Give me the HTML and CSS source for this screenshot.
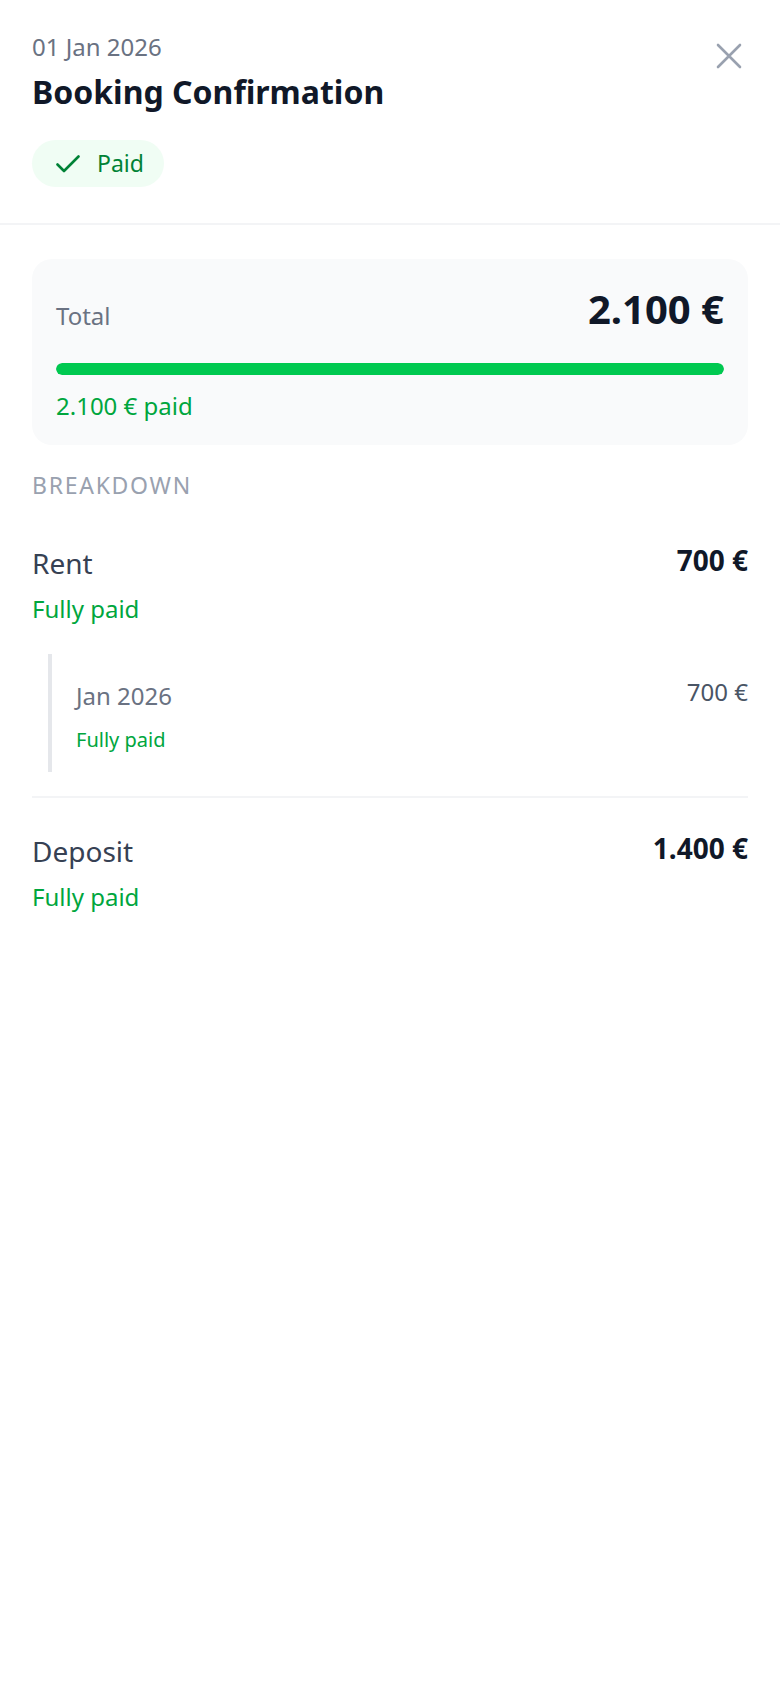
FILE: index.html
```
<!DOCTYPE html>
<html lang="en">
<head>
<meta charset="utf-8">
<title>Booking Confirmation</title>
<link rel="stylesheet" href="styles.css">
</head>
<body>
<div class="sheet">
  <header class="header">
    <div class="header-text">
      <div class="date">01 Jan 2026</div>
      <h1 class="title">Booking Confirmation</h1>
      <div class="pill">
        <svg class="pill-icon" width="24" height="18" viewBox="0 0 24 18" fill="none" stroke="currentColor" stroke-width="2.6" stroke-linecap="round" stroke-linejoin="round"><path d="M22.5 1.5 L8 16 L1.5 9.5"/></svg>
        <span>Paid</span>
      </div>
    </div>
    <button class="close" aria-label="Close">
      <svg width="26" height="26" viewBox="0 0 26 26" fill="none" stroke="currentColor" stroke-width="2.6" stroke-linecap="round"><path d="M2 2 L24 24 M24 2 L2 24"/></svg>
    </button>
  </header>

  <main class="content">
    <section class="total-card">
      <div class="total-row">
        <span class="total-label">Total</span>
        <span class="total-amount">2.100 €</span>
      </div>
      <div class="bar"><div class="bar-fill" style="width:100%"></div></div>
      <div class="paid-text">2.100 € paid</div>
    </section>

    <div class="section-label">BREAKDOWN</div>

    <div class="item">
      <div class="item-row">
        <span class="item-name">Rent</span>
        <span class="item-amount">700 €</span>
      </div>
      <div class="status">Fully paid</div>
      <div class="sub">
        <div class="sub-row">
          <span class="sub-name">Jan 2026</span>
          <span class="sub-amount">700 €</span>
        </div>
        <div class="sub-status">Fully paid</div>
      </div>
    </div>

    <div class="divider"></div>

    <div class="item item-last">
      <div class="item-row">
        <span class="item-name">Deposit</span>
        <span class="item-amount">1.400 €</span>
      </div>
      <div class="status">Fully paid</div>
    </div>
  </main>
</div>
</body>
</html>
```

FILE: styles.css
```
* { box-sizing: border-box; }

html, body {
  margin: 0;
  padding: 0;
  background: #ffffff;
}

body {
  font-family: "Noto Sans", "Open Sans", "Liberation Sans", sans-serif;
  color: #101828;
}

.sheet {
  width: 780px;
  min-height: 1688px;
  background: #ffffff;
}

.header {
  display: flex;
  justify-content: space-between;
  align-items: flex-start;
  padding: 32px 32px 36px 32px;
  border-bottom: 2px solid #f3f4f6;
}

.date {
  font-size: 24px;
  line-height: 30px;
  color: #6a7282;
}

.title {
  margin: 10px 0 0 0;
  font-size: 32px;
  line-height: 40px;
  font-weight: 700;
  color: #101828;
}

.pill {
  margin-top: 28px;
  display: inline-flex;
  align-items: center;
  gap: 17px;
  height: 47px;
  padding: 0 20px 0 24px;
  border-radius: 24px;
  background: #f0fdf4;
  color: #008236;
  font-size: 23px;
  line-height: 31px;
}

.pill-icon { display: block; }

.close {
  margin-top: 11px;
  margin-right: 6px;
  padding: 0;
  border: none;
  background: transparent;
  color: #99a1af;
  width: 26px;
  height: 26px;
}

.close svg { display: block; }

.content {
  padding: 34px 32px 0 32px;
}

.total-card {
  background: #f9fafb;
  border-radius: 20px;
  padding: 24px 24px 23px 24px;
}

.total-row {
  display: flex;
  justify-content: space-between;
  align-items: center;
}

.total-label {
  font-size: 24px;
  line-height: 32px;
  color: #6a7282;
  padding-top: 14px;
}

.total-amount {
  font-size: 40px;
  line-height: 52px;
  font-weight: 700;
  color: #101828;
}

.bar {
  margin-top: 28px;
  height: 12px;
  border-radius: 6px;
  background: #e5e7eb;
  overflow: hidden;
}

.bar-fill {
  height: 100%;
  border-radius: 6px;
  background: #00c950;
}

.paid-text {
  margin-top: 15px;
  font-size: 24px;
  line-height: 32px;
  color: #00a63e;
}

.section-label {
  margin-top: 25px;
  font-size: 23px;
  line-height: 30px;
  letter-spacing: 0.075em;
  color: #99a1af;
}

.item {
  padding-top: 45px;
}

.item-last {
  padding-top: 35px;
}

.item-row {
  display: flex;
  justify-content: space-between;
  align-items: flex-start;
}

.item-name {
  font-size: 28px;
  line-height: 36px;
  color: #364153;
}

.item-amount {
  font-size: 28px;
  line-height: 30px;
  font-weight: 700;
  color: #101828;
}

.status {
  margin-top: 12px;
  font-size: 24px;
  line-height: 32px;
  color: #00a63e;
}

.sub {
  margin: 29px 0 0 16px;
  border-left: 4px solid #e5e7eb;
  padding: 26px 0 18px 24px;
}

.sub-row {
  display: flex;
  justify-content: space-between;
  align-items: flex-start;
}

.sub-name {
  font-size: 24px;
  line-height: 32px;
  color: #6a7282;
}

.sub-amount {
  font-size: 24px;
  line-height: 24px;
  color: #4a5565;
}

.sub-status {
  margin-top: 14px;
  font-size: 20px;
  line-height: 28px;
  color: #00a63e;
}

.divider {
  margin-top: 24px;
  height: 2px;
  background: #f3f4f6;
}
```
